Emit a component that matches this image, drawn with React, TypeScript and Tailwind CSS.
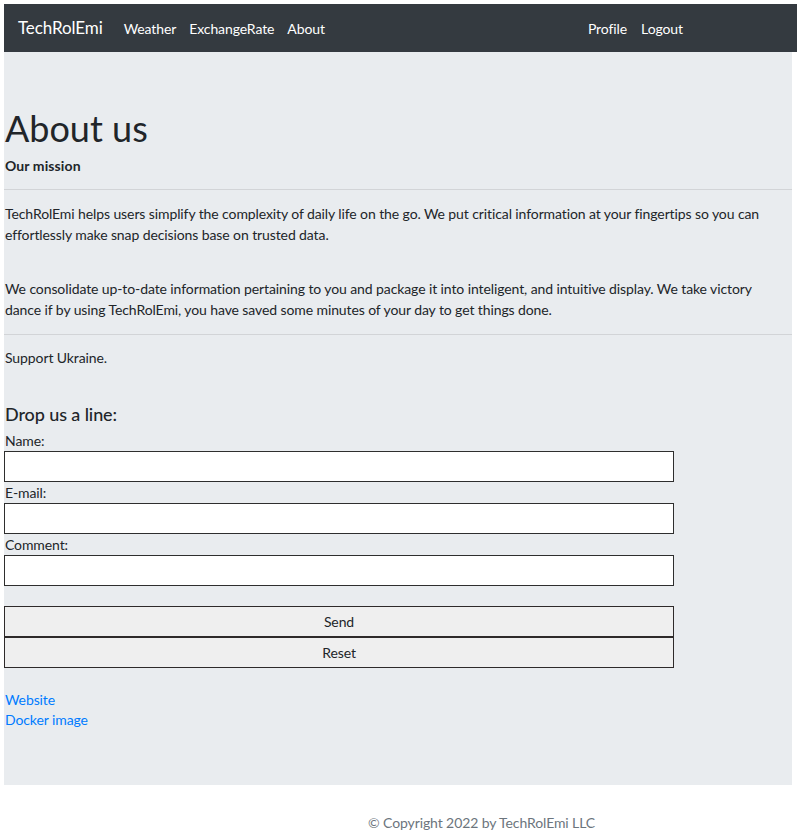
export default function App() {
  return (
    <div className="min-h-screen bg-white pt-[4px] pl-[4px] font-['Lato',sans-serif] text-[#212529] tracking-[-0.1px]">
      <nav className="h-[48px] bg-[#343a40] flex items-center pl-[14px] pr-[114px] text-white">
        <a className="text-[17px] mr-[21px]">TechRolEmi</a>
        <div className="flex gap-[13px] text-[14px]">
          <a>Weather</a>
          <a>ExchangeRate</a>
          <a>About</a>
        </div>
        <div className="ml-auto flex gap-[14px] text-[14px]">
          <a>Profile</a>
          <a>Logout</a>
        </div>
      </nav>
      <main className="w-[788px] bg-[#e9ecef] pt-[55px] pb-[55px] text-[14px] leading-[21px]">
        <h1 className="pl-px text-[36px] leading-[43px] tracking-normal">About us</h1>
        <h6 className="pl-px mt-[5px] font-bold tracking-[0.1px]">Our mission</h6>
        <hr className="mt-[13px] border-0 border-t border-[#d2d4d7]" />
        <p className="pl-px pr-[20px] mt-[13px]">
          TechRolEmi helps users simplify the complexity of daily life on the go. We put critical information at your fingertips so you can effortlessly make snap decisions base on trusted data.
        </p>
        <p className="pl-px pr-[20px] mt-[33px]">
          We consolidate up-to-date information pertaining to you and package it into inteligent, and intuitive display. We take victory dance if by using TechRolEmi, you have saved some minutes of your day to get things done.
        </p>
        <hr className="mt-[14px] border-0 border-t border-[#d2d4d7]" />
        <p className="pl-px mt-[12px]">Support Ukraine.</p>
        <h4 className="pl-px mt-[34px] text-[18px] leading-[24px] font-medium">Drop us a line:</h4>
        <form className="mt-[4px] w-[670px] flex flex-col">
          <label className="block pl-px">Name:</label>
          <input className="h-[31px] border border-[#2e2e2e] bg-white" />
          <label className="block pl-px">E-mail:</label>
          <input className="h-[31px] border border-[#2e2e2e] bg-white" />
          <label className="block pl-px">Comment:</label>
          <input className="h-[31px] border border-[#2e2e2e] bg-white" />
          <button type="button" className="mt-[20px] h-[31px] border border-[#2e2a2a] bg-[#efefef] text-[14px]">Send</button>
          <button type="button" className="h-[31px] border border-[#2e2a2a] bg-[#efefef] text-[14px]">Reset</button>
        </form>
        <div className="pl-px mt-[22px] leading-[20px] flex flex-col items-start text-[#007bff]">
          <a>Website</a>
          <a>Docker image</a>
        </div>
      </main>
      <footer className="pt-[27px] pl-[364px] text-[14px] leading-[21px] text-[#6c757d]">
        © Copyright 2022 by TechRolEmi LLC
      </footer>
    </div>
  );
}
